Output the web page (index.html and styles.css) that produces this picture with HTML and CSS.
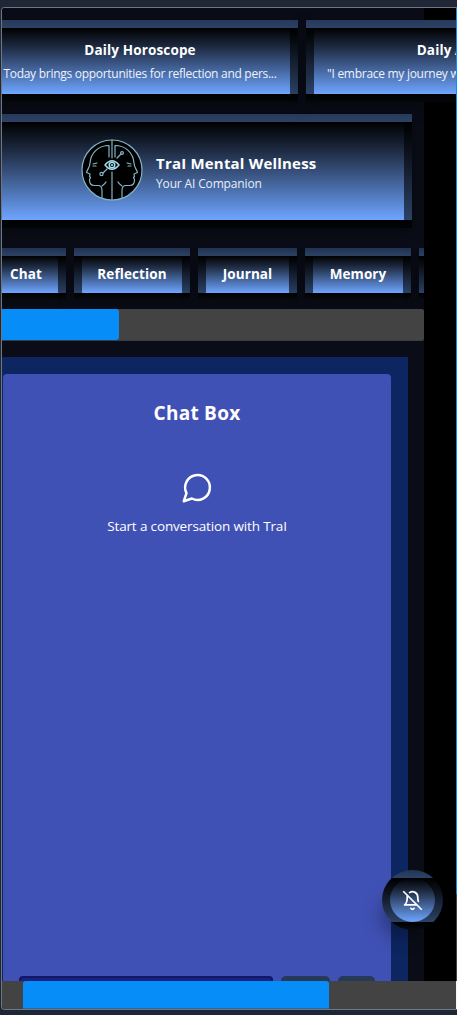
FILE: index.html
```html
<!DOCTYPE html>
<html lang="en">
<head>
<meta charset="utf-8">
<title>TraI Mental Wellness</title>
<link rel="stylesheet" href="styles.css">
</head>
<body>
<div class="window">
  <div class="screen">
    <div class="viewport">
      <div class="app">
        <div class="ticker">
          <section class="bevel ticker-card">
            <h2 class="ticker-title">Daily Horoscope</h2>
            <p class="ticker-text">Today brings opportunities for reflection and pers...</p>
          </section>
          <section class="bevel ticker-card">
            <h2 class="ticker-title affirmation-title">Daily Affirmation</h2>
            <p class="ticker-text affirmation">"I embrace my journey with</p>
          </section>
        </div>
        <header class="bevel brand">
          <svg class="logo" viewBox="0 0 62 62" fill="none" stroke="#82b4c8" stroke-width="1.2" stroke-linecap="round" stroke-linejoin="round">
            <circle cx="31" cy="31" r="30" fill="#000"/>
            <path d="M31 1v18M31 33v28M28 18V6.500C18 6.500 10 13 9 24c0 4-3 7-3.500 9.500L9 35l-.5 2.500 1 1-1 2c-.2 4 1.500 6 5 6H17c3 0 4 2 4 5v7M34 18V6.500C44 6.500 52 13 53 24c0 4 3 7 3.500 9.500L53 35l.5 2.500-1 1 1 2c.2 4-1.500 6-5 6H45c-3 0-4 2-4 5v7M21 47c1.500-1 3-2 4-4M41 47c-1.500-1-3-2-4-4"/>
            <path d="M12 25l4-1M12 27h3M50 25l-4-1M50 27h-3M36 19l4-4M26 30l-4 4"/>
            <circle cx="41" cy="14" r="1.400"/><circle cx="20.500" cy="35" r="1.600"/>
            <path stroke="#a6def0" stroke-width="1.500" d="M24 26q7-8.500 14 0q-7 8.500-14 0z"/>
            <circle cx="31" cy="26" r="2.800" stroke="#a6def0" stroke-width="1.500"/><circle cx="31" cy="26" r=".7" fill="#fff"/>
          </svg>
          <div class="brand-copy">
            <h1 class="brand-name">TraI Mental Wellness</h1>
            <p class="brand-tag">Your AI Companion</p>
          </div>
        </header>
        <nav class="tabs">
          <a class="bevel tab tab-chat">Chat</a>
          <a class="bevel tab tab-reflection">Reflection</a>
          <a class="bevel tab tab-journal">Journal</a>
          <a class="bevel tab tab-memory">Memory</a>
          <a class="bevel tab tab-more"></a>
        </nav>
        <div class="tab-scroll"><div class="tab-thumb"></div></div>
        <main class="main">
          <section class="chat">
            <h2 class="chat-title">Chat Box</h2>
            <div class="empty">
              <svg class="bubble" viewBox="0 0 24 24" fill="none" stroke="#fff" stroke-width="1.800" stroke-linecap="round" stroke-linejoin="round"><path d="M7.900 20A9 9 0 1 0 4 16.100L2 22Z"/></svg>
              <p class="empty-text">Start a conversation with TraI</p>
            </div>
            <div class="composer">
              <div class="field"></div>
              <div class="action action-wide"></div>
              <div class="action action-small"></div>
            </div>
          </section>
        </main>
      </div>
    </div>
    <div class="rail"><div class="rail-thumb"></div></div>
  </div>
  <div class="page-scroll"><div class="page-track"><div class="page-thumb"></div></div><div class="corner"></div></div>
  <button class="bevel bell" aria-label="Notifications off">
    <svg class="bell-icon" viewBox="0 0 24 24" fill="none" stroke="#fff" stroke-width="2" stroke-linecap="round" stroke-linejoin="round"><path d="M8.700 3A6 6 0 0 1 18 8a21.300 21.300 0 0 0 .6 5M17 17H3s3-2 3-9a4.670 4.670 0 0 1 .3-1.700M10.300 21a1.940 1.940 0 0 0 3.400 0M2 2l20 20"/></svg>
  </button>
</div>
</body>
</html>
```
FILE: styles.css
```css
* { box-sizing: border-box; }
body {
  margin: 0;
  height: 1015px;
  padding: 7px 0 0 1px;
  overflow: hidden;
  background: #1f2635;
  color: #fff;
  font-family: "Open Sans", "Noto Sans", sans-serif;
}
h1, h2, p { margin: 0; white-space: nowrap; }
.window {
  position: relative;
  height: 1003px;
  display: flex;
  flex-direction: column;
  border: 1px solid #707682;
  border-right: 0;
  border-radius: 4px 0 0 4px;
  overflow: hidden;
}
.screen { height: 973px; display: flex; background: #000; }
.viewport { flex: 1; min-width: 0; overflow: hidden; }
.app {
  width: 440px;
  height: 973px;
  margin-left: -18px;
  padding-top: 12px;
  background: #0a0d17;
}
/* The padding-box gradient repeats beneath the translucent border. */
.bevel {
  border: 8px solid rgba(0, 0, 0, .6);
  background: linear-gradient(#000, #1f2c44 30%, #6ea5ff);
  box-shadow: 0 4px 14px rgba(0, 0, 0, .35);
}
.ticker { display: flex; gap: 8px; width: 640px; margin-left: -2px; }
.ticker-card { width: 316px; height: 82px; padding: 12px 12px 0; flex: none; text-align: center; }
.ticker-title { font-size: 13.500px; line-height: 20px; font-weight: 700; letter-spacing: .14px; }
.affirmation-title { padding-left: 24px; }
.ticker-text { margin-top: 4px; font-size: 12px; line-height: 20px; letter-spacing: -.28px; color: #eef3fb; }
.affirmation { padding-left: 1px; text-align: left; }
.brand {
  width: 428px;
  height: 114px;
  margin-top: 12px;
  padding-bottom: 2px;
  display: flex;
  align-items: center;
  justify-content: center;
  gap: 13px;
}
.logo { width: 62px; height: 62px; flex: none; }
.brand-copy { padding-top: 4px; }
.brand-name { width: 159px; font-size: 15px; line-height: 22px; letter-spacing: .2px; }
.brand-tag { font-size: 12px; line-height: 19px; letter-spacing: -.15px; color: #e8eef8; }
.tabs { display: flex; gap: 8px; margin-top: 20px; overflow: hidden; height: 61px; }
.tab {
  height: 53px;
  flex: none;
  font-size: 13.500px;
  line-height: 37px;
  font-weight: 700;
  text-align: center;
  letter-spacing: .1px;
}
.tab-chat { width: 82px; padding-left: 2px; }
.tab-reflection { width: 116px; }
.tab-journal { width: 99px; }
.tab-memory { width: 106px; }
.tab-more { width: 90px; }
.tab-scroll { height: 32px; background: #434343; border-bottom: 1px solid #3c3d43; border-radius: 2px; }
.tab-thumb { width: 135px; height: 31px; background: #078df8; border-radius: 0 3px 3px 0; }
.main { width: 424px; height: 624px; margin-top: 16px; padding: 17px 17px 0 19px; background: #0d2560; }
.chat {
  height: 607px;
  padding: 27px 16px 0;
  display: flex;
  flex-direction: column;
  background: #4051b5;
  border-radius: 4px 4px 0 0;
  text-align: center;
}
.chat-title { font-size: 19px; line-height: 24px; letter-spacing: .25px; }
.empty { flex: 1; padding-top: 46px; display: flex; flex-direction: column; align-items: center; }
.bubble { width: 33px; height: 33px; }
.empty-text { margin-top: 12px; font-size: 13.500px; line-height: 20px; letter-spacing: -.15px; }
.composer { display: flex; gap: 8px; }
.field { width: 254px; height: 5px; background: #1a237e; border: 2px solid #12176c; border-bottom: 0; border-radius: 4px 4px 0 0; }
.action { height: 5px; background: #263956; border-radius: 5px 5px 0 0; }
.action-wide { width: 49px; }
.action-small { width: 37px; }
.rail { width: 1px; background: #434343; }
.rail-thumb { height: 886px; background: #078df8; }
.page-scroll { flex: 1; display: flex; }
.page-track { flex: 1; padding-left: 21px; background: #434343; }
.page-thumb { width: 306px; height: 28px; background: #078df8; border-bottom: 1px solid #246ca8; border-radius: 3px 3px 0 0; }
.corner { width: 1px; background: #f5f5f5; }
.bell {
  position: absolute;
  left: 380px;
  top: 862px;
  width: 61px;
  height: 60px;
  padding: 0;
  display: flex;
  align-items: center;
  justify-content: center;
  border-radius: 50%;
  box-shadow: -10px 16px 18px -8px rgba(0, 0, 0, .3);
}
.bell-icon { width: 21px; height: 21px; }
```
